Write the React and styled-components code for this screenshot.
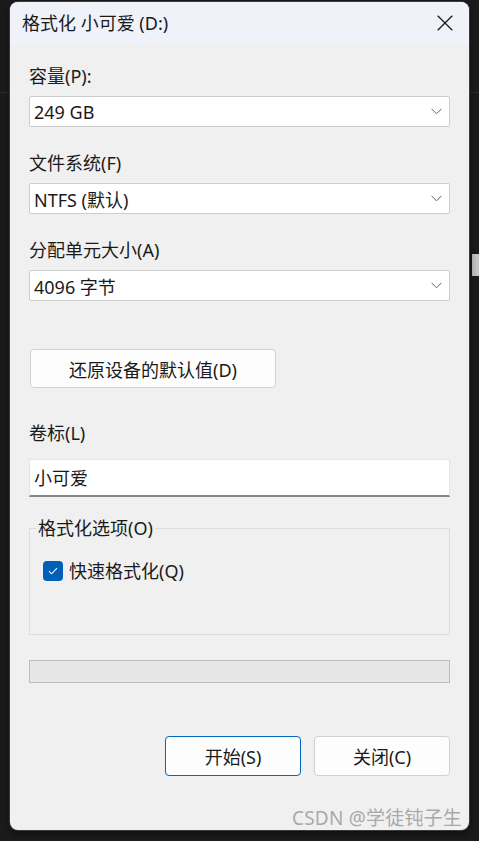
import React from "react";
import styled, { createGlobalStyle } from "styled-components";

const GlobalStyle = createGlobalStyle`
  html, body {
    margin: 0;
    padding: 0;
    background: #1b1b1b;
    overflow: hidden;
  }
  * {
    box-sizing: border-box;
  }
`;

const font = `"Noto Sans", "Noto Sans CJK SC", sans-serif`;

const Desktop = styled.div`
  position: relative;
  width: 479px;
  height: 841px;
  padding: 2px 10px 0 10px;
  background: #1b1b1b;
  font-family: ${font};
  color: #1a1a1a;
`;

const DeskLine = styled.div`
  position: absolute;
  left: 0;
  right: 0;
  top: 92px;
  height: 1px;
  background: #2e2e2e;
`;

const ScrollThumb = styled.div`
  position: absolute;
  right: 0;
  top: 254px;
  width: 7px;
  height: 22px;
  background: #c6c6c6;
`;

const Dialog = styled.div`
  position: relative;
  width: 459px;
  height: 828px;
  border-radius: 8px;
  overflow: hidden;
  background: #f0f0f0;
  box-shadow: 0 0 0 1px #3c3c3c, 0 3px 8px rgba(0, 0, 0, 0.6);
  display: flex;
  flex-direction: column;
`;

const TitleBar = styled.div`
  height: 42px;
  flex-shrink: 0;
  display: flex;
  align-items: center;
  justify-content: space-between;
  padding: 0 16px 0 12px;
  background: #eff2f9;
  font-size: 18px;
  line-height: 24px;
`;

const CloseBtn = styled.div`
  width: 16px;
  height: 16px;
  display: flex;
  align-items: center;
  justify-content: center;
`;

const Body = styled.div`
  display: flex;
  flex-direction: column;
  padding: 20px 19px 0 19px;
`;

const Label = styled.div`
  font-size: 18px;
  line-height: 24px;
  margin-top: ${(p) => p.$top || 0}px;
  margin-bottom: ${(p) => p.$bottom || 8}px;
`;

const Select = styled.div`
  height: 31px;
  display: flex;
  align-items: center;
  justify-content: space-between;
  padding: 0 7px 0 4px;
  background: #ffffff;
  border: 1px solid #cdcdcd;
  border-radius: 2px;
  font-size: 18px;
`;

const Button = styled.div`
  height: ${(p) => p.$h || 40}px;
  width: ${(p) => p.$w}px;
  display: flex;
  align-items: center;
  justify-content: center;
  background: #fdfdfd;
  border: 1px solid ${(p) => (p.$primary ? "#0067c0" : "#d0d0d0")};
  border-radius: 4px;
  font-size: 18px;
`;

const ResetButton = styled(Button)`
  margin-top: 48px;
  margin-left: 1px;
`;

const TextInput = styled.div`
  height: 38px;
  display: flex;
  align-items: center;
  padding: 0 4px 2px 4px;
  background: #ffffff;
  border: 1px solid #e4e4e4;
  border-bottom: 2px solid #868686;
  font-size: 18px;
`;

const Group = styled.fieldset`
  margin: 19px 0 0 0;
  height: 119px;
  min-width: 0;
  padding: 19px 13px 0 13px;
  border: 1px solid #dcdcdc;
`;

const Legend = styled.legend`
  margin-left: -7px;
  padding: 0 2px;
  font-size: 18px;
  line-height: 24px;
`;

const CheckRow = styled.div`
  display: flex;
  align-items: center;
  gap: 6px;
  font-size: 18px;
  line-height: 24px;
`;

const CheckBox = styled.div`
  width: 20px;
  height: 20px;
  border-radius: 4px;
  background: #005fb8;
  display: flex;
  align-items: center;
  justify-content: center;
`;

const Progress = styled.div`
  margin-top: 25px;
  height: 23px;
  background: #e6e6e6;
  border: 1px solid #bcbcbc;
`;

const Actions = styled.div`
  margin-top: 53px;
  display: flex;
  justify-content: flex-end;
  gap: 13px;
`;

const Watermark = styled.div`
  position: absolute;
  right: 7px;
  bottom: 1px;
  font-size: 19px;
  line-height: 22px;
  color: #a9a9a9;
  letter-spacing: 0.2px;
`;

const Chevron = () => (
  <svg width="11" height="7" viewBox="0 0 11 7">
    <polyline points="0.5,0.8 5.5,5.8 10.5,0.8" fill="none" stroke="#5f5f5f" strokeWidth="1" />
  </svg>
);

const CloseIcon = () => (
  <svg width="16" height="16" viewBox="0 0 16 16">
    <path d="M0.7 0.7 L15.3 15.3 M15.3 0.7 L0.7 15.3" stroke="#1a1a1a" strokeWidth="1.3" />
  </svg>
);

const CheckIcon = () => (
  <svg width="10" height="8" viewBox="0 0 10 8">
    <polyline points="1,4.2 3.6,6.8 9,1.2" fill="none" stroke="#ffffff" strokeWidth="1.1" />
  </svg>
);

const fields = [
  { label: "容量(P):", value: "249 GB", top: 0 },
  { label: "文件系统(F)", value: "NTFS (默认)", top: 24 },
  { label: "分配单元大小(A)", value: "4096 字节", top: 24 },
];

export default function App() {
  return (
    <>
      <GlobalStyle />
      <Desktop>
        <DeskLine />
        <ScrollThumb />
        <Dialog>
          <TitleBar>
            <span>格式化 小可爱 (D:)</span>
            <CloseBtn>
              <CloseIcon />
            </CloseBtn>
          </TitleBar>
          <Body>
            {fields.map((f) => (
              <React.Fragment key={f.label}>
                <Label $top={f.top}>{f.label}</Label>
                <Select>
                  <span>{f.value}</span>
                  <Chevron />
                </Select>
              </React.Fragment>
            ))}
            <ResetButton $w={246} $h={39}>还原设备的默认值(D)</ResetButton>
            <Label $top={33} $bottom={14}>卷标(L)</Label>
            <TextInput>小可爱</TextInput>
            <Group>
              <Legend>格式化选项(O)</Legend>
              <CheckRow>
                <CheckBox>
                  <CheckIcon />
                </CheckBox>
                快速格式化(Q)
              </CheckRow>
            </Group>
            <Progress />
            <Actions>
              <Button $w={136} $primary>开始(S)</Button>
              <Button $w={136}>关闭(C)</Button>
            </Actions>
          </Body>
          <Watermark>CSDN @学徒钝子生</Watermark>
        </Dialog>
      </Desktop>
    </>
  );
}
